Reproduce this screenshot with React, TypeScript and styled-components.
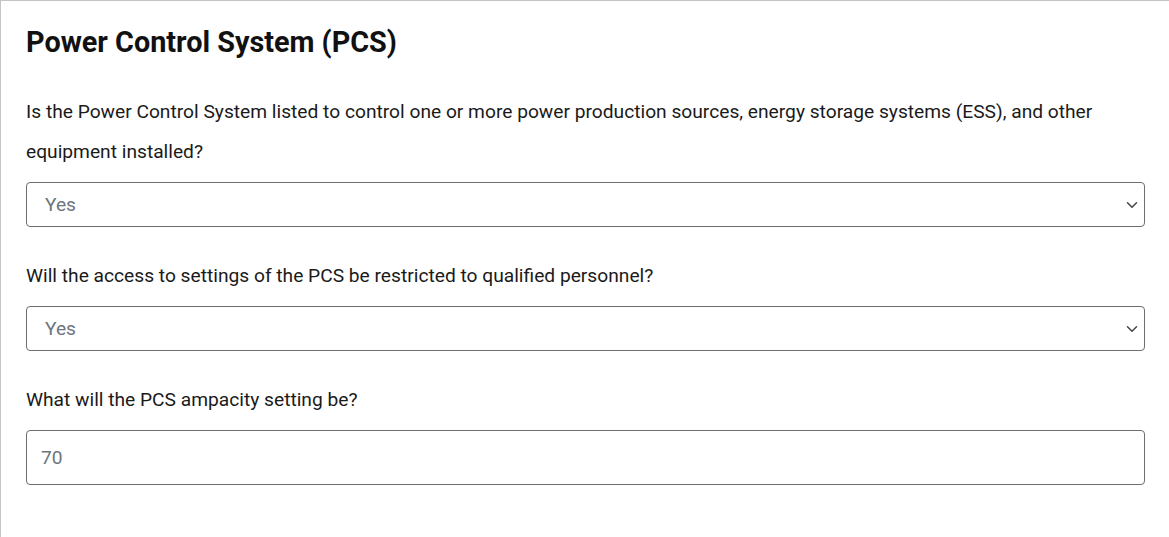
import React from "react";
import styled, { createGlobalStyle } from "styled-components";

const Global = createGlobalStyle`
  html, body { margin: 0; padding: 0; background: #fff; }
  body { font-family: Roboto, "Liberation Sans", Arial, sans-serif; color: #212529; }
  * { box-sizing: border-box; }
`;

const Panel = styled.div`
  width: 1200px;
  min-height: 537px;
  border-top: 1px solid #c4c4c4;
  border-left: 1px solid #c4c4c4;
  padding: 24px 0 0 25px;
`;

const Form = styled.div`
  width: 1119px;
  display: flex;
  flex-direction: column;
`;

const Title = styled.h1`
  margin: 0 0 33px 0;
  font-size: 28.8px;
  line-height: 34px;
  font-weight: 700;
  color: #111;
`;

const Field = styled.div`
  display: flex;
  flex-direction: column;
  margin-bottom: 29px;
`;

const Label = styled.label`
  font-size: 19.2px;
  line-height: 40px;
  color: #1a1a1a;
  margin-bottom: 10px;
`;

const SelectWrap = styled.div`
  position: relative;
  height: 45px;
  border: 1px solid #6e6e6e;
  border-radius: 4px;
  display: flex;
  align-items: center;
  padding-left: 18px;
  font-size: 19.2px;
  color: #6c757d;
`;

const Chevron = styled.svg`
  position: absolute;
  right: 6px;
  top: 50%;
  transform: translateY(-50%);
`;

const Input = styled.div<{ $h: number }>`
  height: ${(p) => p.$h}px;
  border: 1px solid #6e6e6e;
  border-radius: 4px;
  display: flex;
  align-items: center;
  padding-left: 14px;
  font-size: 19.2px;
  color: #6c757d;
`;

const Select = ({ value }: { value: string }) => (
  <SelectWrap>
    {value}
    <Chevron width="12" height="12" viewBox="0 0 16 16">
      <path d="M2 5l6 6 6-6" fill="none" stroke="#444" strokeWidth="2" strokeLinecap="round" strokeLinejoin="round" />
    </Chevron>
  </SelectWrap>
);

export default function App() {
  return (
    <>
      <Global />
      <Panel>
        <Form>
          <Title>Power Control System (PCS)</Title>
          <Field>
            <Label>
              Is the Power Control System listed to control one or more power production sources, energy storage systems (ESS), and other equipment installed?
            </Label>
            <Select value="Yes" />
          </Field>
          <Field>
            <Label>Will the access to settings of the PCS be restricted to qualified personnel?</Label>
            <Select value="Yes" />
          </Field>
          <Field>
            <Label>What will the PCS ampacity setting be?</Label>
            <Input $h={55}>70</Input>
          </Field>
        </Form>
      </Panel>
    </>
  );
}
